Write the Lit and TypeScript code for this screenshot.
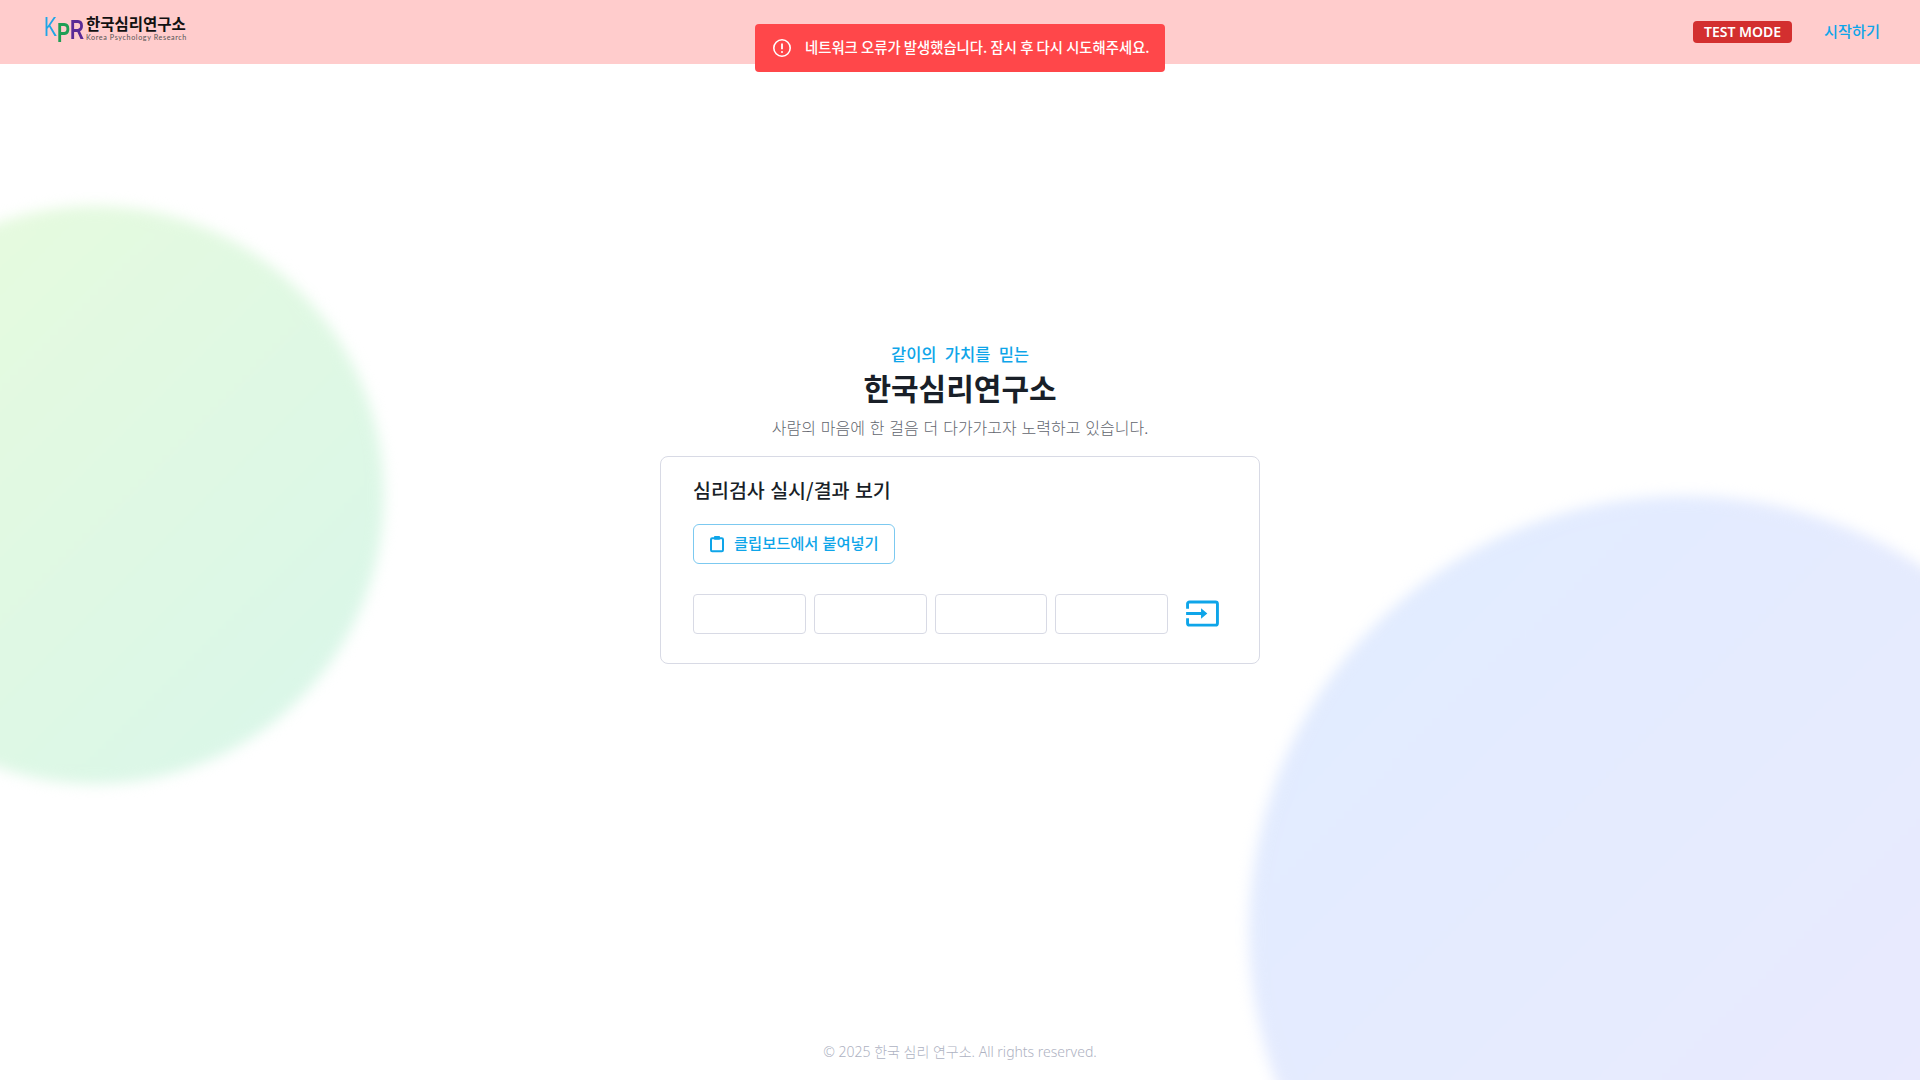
import { LitElement, html, css } from "lit";
import { customElement } from "lit/decorators.js";

@customElement("app-root")
export class AppRoot extends LitElement {
  static styles = css`
    :host {
      display: block;
      position: relative;
      width: 100%;
      height: 1080px;
      overflow: hidden;
      background: #fff;
      font-family: "Noto Sans CJK KR", "Noto Sans", sans-serif;
      color: #191f28;
    }
    .page { position: relative; height: 100%; display: flex; flex-direction: column; }
    .blob { position: absolute; border-radius: 50%; filter: blur(7px); }
    .blob-left {
      left: -194px; top: 206px; width: 578px; height: 578px;
      background: linear-gradient(135deg, #e8fbdc 0%, #d8f6ea 100%);
    }
    .blob-right {
      left: 1249px; top: 496px; width: 870px; height: 870px;
      background: linear-gradient(135deg, #e0ecff 0%, #ece9fd 100%);
    }
    header {
      position: relative;
      height: 64px;
      flex: none;
      background: #ffcccc;
      display: flex;
      align-items: center;
      justify-content: space-between;
      padding: 0 40px 0 44px;
    }
    .logo { display: flex; align-items: center; gap: 3px; margin-top: -7px; }
    .kpr-box { width: 39px; height: 26px; flex: none; }
    .kpr {
      display: flex; width: max-content; transform: scaleX(0.72); transform-origin: left center;
      font-family: "Liberation Sans", sans-serif; font-size: 27px; line-height: 26px;
    }
    .k { color: #1fa5e6; font-weight: 400; position: relative; top: -2px; }
    .p { color: #1f9e55; font-weight: 700; position: relative; top: 4px; }
    .r { color: #5a2a96; font-weight: 700; position: relative; top: 1px; }
    .logo-text { display: flex; flex-direction: column; }
    .logo-ko { font-size: 15.5px; line-height: 18px; font-weight: 700; color: #111; margin-top: -2px; }
    .logo-en { font-size: 7.2px; line-height: 8px; color: #555; letter-spacing: 0.6px; font-family: "Lato", sans-serif; white-space: nowrap; margin-top: 2px; }
    .right { display: flex; align-items: center; gap: 32px; }
    .badge {
      background: #d32f2f; color: #fff; border-radius: 4px;
      width: 99px; height: 22px; box-sizing: border-box; padding-bottom: 1px;
      display: flex; align-items: center; justify-content: center;
      font-family: "Noto Sans", sans-serif; font-size: 14px; font-weight: 600;
    }
    .start { color: #0ea5e9; font-size: 15.2px; line-height: 22px; font-weight: 500; padding-bottom: 4px; }
    .toast {
      position: absolute; left: 755px; top: 24px;
      width: 410px; height: 48px; box-sizing: border-box;
      background: #ff474a; color: #fff; border-radius: 4px;
      display: flex; align-items: center; gap: 13px; padding-left: 17px;
      font-size: 14.35px; font-weight: 500; white-space: nowrap;
      z-index: 2;
    }
    .toast span { padding-bottom: 3px; }
    .toast svg { flex: none; }
    main {
      position: relative;
      flex: 1;
      display: flex;
      flex-direction: column;
      align-items: center;
      padding-top: 278px;
    }
    .eyebrow { color: #0ea5e9; font-size: 16.5px; line-height: 24px; font-weight: 500; word-spacing: 4.6px; }
    h1 { margin: -1px 0 0; font-size: 30px; line-height: 44px; font-weight: 700; color: #191f28; }
    .sub { margin-top: 6px; font-size: 16px; line-height: 24px; color: #62666e; font-weight: 300; word-spacing: 1.3px; }
    .card {
      margin-top: 17px;
      width: 600px; height: 208px; box-sizing: border-box;
      background: #fff;
      border: 1px solid #d8dae5; border-radius: 8px;
      padding: 19px 32px 0;
    }
    h2 { margin: 0; font-size: 19.5px; line-height: 28px; font-weight: 500; color: #191f28; word-spacing: 1px; }
    .paste {
      margin-top: 20px;
      display: inline-flex; align-items: center; gap: 7px;
      width: 202px; height: 40px; box-sizing: border-box;
      padding-left: 15px;
      background: #fff;
      border: 1px solid #7cc9f0; border-radius: 6px;
      color: #0ea5e9; font: inherit; font-size: 15.3px; font-weight: 500; word-spacing: 0.5px;
    }
    .paste span { padding-bottom: 4px; }
    .inputs { margin-top: 30px; display: flex; align-items: center; gap: 8px; }
    .inputs input {
      width: 112.75px; height: 40px; box-sizing: border-box;
      border: 1px solid #d8dae5; border-radius: 4px; background: #fff; padding: 0; outline: none;
    }
    .go { margin-left: 9.5px; margin-bottom: 1px; width: 33px; height: 27px; display: block; }
    footer {
      position: absolute; left: 0; right: 0; top: 1041px;
      text-align: center; font-family: "Noto Sans", "Noto Sans CJK KR", sans-serif;
      font-size: 14px; line-height: 22px; font-weight: 300; color: #aeb2c2;
    }
  `;

  render() {
    return html`
      <div class="page">
        <div class="blob blob-left"></div>
        <div class="blob blob-right"></div>
        <header>
          <div class="logo">
            <div class="kpr-box">
              <div class="kpr"><span class="k">K</span><span class="p">P</span><span class="r">R</span></div>
            </div>
            <div class="logo-text">
              <span class="logo-ko">한국심리연구소</span>
              <span class="logo-en">Korea Psychology Research</span>
            </div>
          </div>
          <div class="right">
            <span class="badge">TEST MODE</span>
            <span class="start">시작하기</span>
          </div>
        </header>
        <div class="toast">
          <svg width="20" height="20" viewBox="0 0 20 20" fill="none" stroke="#fff" stroke-width="1.6">
            <circle cx="10" cy="10" r="8.2"></circle>
            <path d="M10 5.6v5.6" stroke-width="1.8"></path>
            <circle cx="10" cy="14" r="1" fill="#fff" stroke="none"></circle>
          </svg>
          <span>네트워크 오류가 발생했습니다. 잠시 후 다시 시도해주세요.</span>
        </div>
        <main>
          <div class="eyebrow">같이의 가치를 믿는</div>
          <h1>한국심리연구소</h1>
          <div class="sub">사람의 마음에 한 걸음 더 다가가고자 노력하고 있습니다.</div>
          <section class="card">
            <h2>심리검사 실시/결과 보기</h2>
            <button class="paste">
              <svg width="18" height="18" viewBox="0 0 18 18" fill="none">
                <rect x="2" y="3.2" width="12" height="13" rx="1.2" stroke="#0ea5e9" stroke-width="2"></rect>
                <rect x="5" y="1" width="6" height="3.8" rx="0.8" fill="#0ea5e9"></rect>
              </svg>
              <span>클립보드에서 붙여넣기</span>
            </button>
            <div class="inputs">
              <input type="text" /><input type="text" /><input type="text" /><input type="text" />
              <svg class="go" viewBox="0 0 34 28" fill="none">
                <path d="M1.5 9V4a2 2 0 0 1 2-2h27a2 2 0 0 1 2 2v20a2 2 0 0 1-2 2h-27a2 2 0 0 1-2-2v-5" stroke="#0ea5e9" stroke-width="3"></path>
                <path d="M0 12.5h15.5V8.5L22 14l-6.5 5.5v-4H0z" fill="#0ea5e9"></path>
              </svg>
            </div>
          </section>
        </main>
        <footer>© 2025 한국 심리 연구소. All rights reserved.</footer>
      </div>
    `;
  }
}
